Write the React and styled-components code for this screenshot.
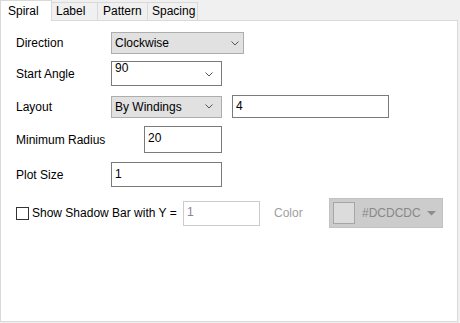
import React from "react";
import styled, { createGlobalStyle } from "styled-components";

const GlobalStyle = createGlobalStyle`
  html, body { margin: 0; padding: 0; background: #f0f0f0; }
  body {
    font-family: "Liberation Sans", Arial, sans-serif;
    font-size: 12px;
    color: #000;
  }
  #root { width: 460px; height: 323px; }
`;

const Window = styled.div`
  width: 460px;
  height: 323px;
  display: flex;
  flex-direction: column;
  background: #f0f0f0;
`;

const TabBar = styled.div`
  display: flex;
  align-items: flex-end;
  height: 20px;
`;

const Tab = styled.div`
  box-sizing: border-box;
  flex: none;
  width: ${(p) => p.$w}px;
  height: ${(p) => (p.$active ? 21 : 18)}px;
  margin-bottom: ${(p) => (p.$active ? -1 : 0)}px;
  border-top: 1px solid #d9d9d9;
  border-right: 1px solid #d9d9d9;
  border-left: ${(p) => (p.$first ? "1px solid #d9d9d9" : "none")};
  background: ${(p) => (p.$active ? "#ffffff" : "#f0f0f0")};
  padding-left: ${(p) => p.$pl}px;
  padding-top: ${(p) => (p.$active ? 2 : 0)}px;
  line-height: 16px;
  white-space: nowrap;
  position: relative;
  z-index: ${(p) => (p.$active ? 1 : 0)};
`;

const Panel = styled.div`
  box-sizing: border-box;
  width: 458px;
  height: 302px;
  background: #ffffff;
  border: 1px solid #d9d9d9;
  padding-left: 15px;
  display: flex;
  flex-direction: column;
`;

const Row = styled.div`
  display: flex;
  align-items: center;
  height: ${(p) => p.$h}px;
  margin-top: ${(p) => p.$mt}px;
  flex: none;
`;

const Label = styled.div`
  flex: none;
  width: ${(p) => p.$w}px;
  white-space: nowrap;
`;

const Combo = styled.div`
  box-sizing: border-box;
  flex: none;
  display: flex;
  align-items: center;
  width: ${(p) => p.$w}px;
  height: ${(p) => p.$h}px;
  background: ${(p) => (p.$editable ? "#ffffff" : "#e1e1e1")};
  border: 1px solid ${(p) => (p.$editable ? "#7a7a7a" : "#adadad")};
  padding-left: 3px;
`;

const ComboText = styled.span`
  align-self: ${(p) => (p.$top ? "flex-start" : "center")};
  line-height: ${(p) => (p.$top ? "12px" : "16px")};
  white-space: nowrap;
`;

const ChevronWrap = styled.span`
  margin-left: auto;
  margin-right: ${(p) => p.$mr}px;
  display: flex;
  margin-top: ${(p) => p.$dy || 0}px;
`;

const Field = styled.div`
  box-sizing: border-box;
  flex: none;
  width: ${(p) => p.$w}px;
  height: ${(p) => p.$h}px;
  margin-left: ${(p) => p.$ml || 0}px;
  background: #ffffff;
  border: 1px solid ${(p) => (p.$disabled ? "#cccccc" : "#7a7a7a")};
  color: ${(p) => (p.$disabled ? "#8a8296" : "#000")};
  padding: ${(p) => p.$pt}px 0 0 3px;
  line-height: 16px;
`;

const CheckBox = styled.span`
  box-sizing: border-box;
  flex: none;
  width: 13px;
  height: 13px;
  border: 1px solid #333333;
  background: #ffffff;
`;

const CheckLabel = styled.span`
  flex: none;
  width: 151px;
  margin-left: 3px;
  white-space: nowrap;
`;

const ColorLabel = styled.span`
  flex: none;
  width: 55px;
  margin-left: 14px;
  color: #a0a0a0;
`;

const ColorButton = styled.div`
  box-sizing: border-box;
  flex: none;
  width: 114px;
  height: 30px;
  display: flex;
  align-items: center;
  background: #cccccc;
  border: 1px solid #c2c2c2;
  padding-left: 3px;
`;

const Swatch = styled.span`
  box-sizing: border-box;
  flex: none;
  width: 22px;
  height: 22px;
  background: #dcdcdc;
  border: 1px solid #a6a6a6;
`;

const ColorText = styled.span`
  margin-left: 7px;
  color: #888888;
  white-space: nowrap;
`;

const Caret = styled.span`
  margin-left: auto;
  margin-right: 6px;
  display: flex;
`;

const Chevron = () => (
  <svg width="8" height="5" viewBox="0 0 8 5">
    <polyline points="0.5,0.5 4,4 7.5,0.5" fill="none" stroke="#555" strokeWidth="1" />
  </svg>
);

export default function App() {
  return (
    <>
      <GlobalStyle />
      <Window>
        <TabBar>
          <Tab $w={52} $pl={7} $active $first>Spiral</Tab>
          <Tab $w={46} $pl={4}>Label</Tab>
          <Tab $w={50} $pl={5}>Pattern</Tab>
          <Tab $w={50} $pl={4}>Spacing</Tab>
        </TabBar>
        <Panel>
          <Row $h={22} $mt={11}>
            <Label $w={95}>Direction</Label>
            <Combo $w={133} $h={22}>
              <ComboText>Clockwise</ComboText>
              <ChevronWrap $mr={4}><Chevron /></ChevronWrap>
            </Combo>
          </Row>
          <Row $h={25} $mt={7}>
            <Label $w={95}>Start Angle</Label>
            <Combo $w={111} $h={25} $editable>
              <ComboText $top>90</ComboText>
              <ChevronWrap $mr={8} $dy={2}><Chevron /></ChevronWrap>
            </Combo>
          </Row>
          <Row $h={23} $mt={9}>
            <Label $w={95}>Layout</Label>
            <Combo $w={111} $h={22}>
              <ComboText>By Windings</ComboText>
              <ChevronWrap $mr={8}><Chevron /></ChevronWrap>
            </Combo>
            <Field $w={157} $h={23} $ml={10} $pt={2}>4</Field>
          </Row>
          <Row $h={27} $mt={8}>
            <Label $w={128}>Minimum Radius</Label>
            <Field $w={78} $h={27} $pt={3}>20</Field>
          </Row>
          <Row $h={25} $mt={9}>
            <Label $w={95}>Plot Size</Label>
            <Field $w={111} $h={25} $pt={3}>1</Field>
          </Row>
          <Row $h={30} $mt={11}>
            <CheckBox />
            <CheckLabel>Show Shadow Bar with Y =</CheckLabel>
            <Field $w={77} $h={25} $pt={2} $disabled>1</Field>
            <ColorLabel>Color</ColorLabel>
            <ColorButton>
              <Swatch />
              <ColorText>#DCDCDC</ColorText>
              <Caret>
                <svg width="9" height="5" viewBox="0 0 9 5">
                  <polygon points="0,0 9,0 4.5,4.5" fill="#8c8c8c" />
                </svg>
              </Caret>
            </ColorButton>
          </Row>
        </Panel>
      </Window>
    </>
  );
}
